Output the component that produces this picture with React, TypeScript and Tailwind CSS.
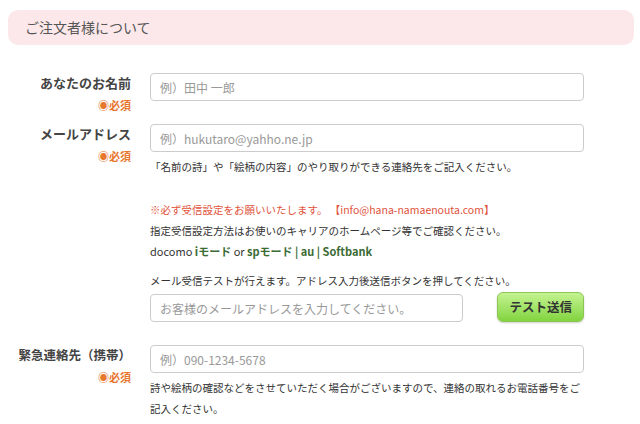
const Required = () => (
    <p className='mt-[3px] leading-[18px] text-[11px] font-bold text-[#e8772e]'>◉必須</p>
)

const App = () => {
    return (
        <div className="w-[640px] h-[424px] overflow-hidden bg-white text-[#333] font-['Meiryo','Noto_Sans_CJK_JP',sans-serif]">
            <div className='pt-[10px] px-[8px]'>
                <div className='h-[35px] w-[626px] rounded-[10px] bg-[#fce8ea] pl-[17px] flex items-center text-[14px] text-[#555]'>
                    ご注文者様について
                </div>
            </div>

            {/* お名前 */}
            <div className='mt-[28px] flex items-start'>
                <div className='w-[131px] text-right'>
                    <p className='leading-[20px] text-[13px] font-bold text-[#444]'>あなたのお名前</p>
                    <Required />
                </div>
                <div className='ml-[19px] w-[434px]'>
                    <input
                        className='w-full h-[28px] px-[9px] rounded-[4px] border border-[#ccc] text-[12px] outline-none placeholder:text-[#999]'
                        placeholder='例）田中 一郎'
                    />
                </div>
            </div>

            {/* メール */}
            <div className='mt-[10px] flex items-start'>
                <div className='w-[131px] text-right'>
                    <p className='leading-[20px] text-[13px] font-bold text-[#444]'>メールアドレス</p>
                    <Required />
                </div>
                <div className='ml-[19px] w-[434px] text-[10.5px]'>
                    <input
                        className='w-full h-[28px] px-[9px] rounded-[4px] border border-[#ccc] text-[12px] outline-none placeholder:text-[#999]'
                        placeholder='例）hukutaro@yahho.ne.jp'
                    />
                    <p className='mt-[5px] leading-[20px]'>「名前の詩」や「絵柄の内容」のやり取りができる連絡先をご記入ください。</p>
                    <p className='mt-[22px] leading-[21px] text-[#e0523c]'>※必ず受信設定をお願いいたします。 【info@hana-namaenouta.com】</p>
                    <p className='leading-[21px]'>指定受信設定方法はお使いのキャリアのホームページ等でご確認ください。</p>
                    <p className='leading-[21px] text-[11px]'>
                        docomo <span className='font-bold text-[#3b6b35]'>iモード</span> or <span className='font-bold text-[#3b6b35]'>spモード&nbsp;|&nbsp;au&nbsp;|&nbsp;Softbank</span>
                    </p>
                    <p className='mt-[8px] leading-[21px]'>メール受信テストが行えます。アドレス入力後送信ボタンを押してください。</p>
                    <div className='mt-[1px] flex items-start'>
                        <input
                            className='mt-[2px] w-[315px] h-[28px] px-[9px] rounded-[4px] border border-[#ccc] text-[12px] outline-none placeholder:text-[#999]'
                            placeholder='お客様のメールアドレスを入力してください。'
                        />
                        <button className='ml-[34px] w-[87px] h-[30px] rounded-[6px] border border-[#8cc652] bg-gradient-to-b from-[#c4f38f] to-[#82d43e] shadow-[0_1px_2px_rgba(0,0,0,0.2)] text-[12.5px] font-bold text-[#333]'>
                            テスト送信
                        </button>
                    </div>
                </div>
            </div>

            {/* 緊急連絡先 */}
            <div className='mt-[23px] flex items-start'>
                <div className='w-[131px] text-right'>
                    <p className='leading-[20px] text-[12.5px] font-bold text-[#444]'>緊急連絡先（携帯）</p>
                    <Required />
                </div>
                <div className='ml-[19px] w-[436px] text-[10.5px]'>
                    <input
                        className='w-[434px] h-[28px] px-[9px] rounded-[4px] border border-[#ccc] text-[12px] outline-none placeholder:text-[#999]'
                        placeholder='例）090-1234-5678'
                    />
                    <p className='mt-[4px] leading-[21px]'>詩や絵柄の確認などをさせていただく場合がございますので、連絡の取れるお電話番号をご記入ください。</p>
                </div>
            </div>
        </div>
    )
}

export default App
